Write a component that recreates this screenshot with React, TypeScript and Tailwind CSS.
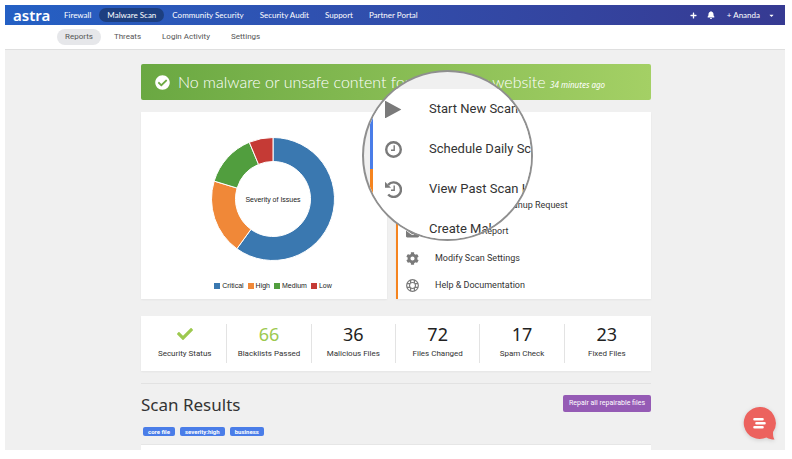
import { FaBell, FaCaretDown, FaCheck, FaCheckCircle, FaCog, FaEnvelope, FaPlus } from 'react-icons/fa'
import type { ReactNode } from 'react'

function PlayIcon({ className }: { className?: string }) {
  return (
    <svg viewBox="0 0 24 24" className={className} fill="currentColor" aria-hidden="true">
      <path d="M0 .5v23c0 .5.5.8 1 .5l21.500-11.500c.4-.2.4-.8 0-1L1 0c-.5-.3-1 0-1 .5z" />
    </svg>
  )
}

function ClockIcon({ className }: { className?: string }) {
  return (
    <svg viewBox="0 0 24 24" className={className} fill="none" stroke="currentColor" aria-hidden="true">
      <circle cx="12" cy="12" r="10.300" strokeWidth="3.400" />
      <path d="M13 6v7H8.500" strokeWidth="2" />
    </svg>
  )
}

function HistoryIcon({ className }: { className?: string }) {
  return (
    <svg viewBox="0 0 24 24" className={className} fill="none" stroke="currentColor" aria-hidden="true">
      <path d="M4.500 5.500A10.300 10.300 0 1 1 4.500 19" strokeWidth="3.400" />
      <path d="M0 1v8.500h8.500z" fill="currentColor" stroke="none" />
      <path d="M13 6.500V13H8.500" strokeWidth="2" />
    </svg>
  )
}

function LifeRingIcon({ className }: { className?: string }) {
  return (
    <svg viewBox="0 0 24 24" className={className} fill="none" stroke="currentColor" aria-hidden="true">
      <circle cx="12" cy="12" r="10.800" strokeWidth="2.200" />
      <circle cx="12" cy="12" r="5.500" strokeWidth="2" />
      <path d="M8.500 1.800v5.600M15.500 1.800v5.600M8.500 16.600v5.600M15.500 16.600v5.600" strokeWidth="2.200" />
      <path d="M1.800 8.500h5.600M1.800 15.500h5.600M16.600 8.500h5.600M16.600 15.500h5.600" strokeWidth="2.200" />
    </svg>
  )
}

const navLinks = ['Firewall', 'Malware Scan', 'Community Security', 'Security Audit', 'Support', 'Partner Portal']
const tabs = ['Reports', 'Threats', 'Login Activity', 'Settings']

const actions = [
  { label: 'Start New Scan', Icon: PlayIcon, border: 'border-[#4a7de8]' },
  { label: 'Schedule Daily Scan', Icon: ClockIcon, border: 'border-[#4a7de8]' },
  { label: 'View Past Scan History', Icon: HistoryIcon, border: 'border-[#f5841f]' },
  { label: 'Create Malware Cleanup Request', Icon: FaEnvelope, border: 'border-[#f5841f]' },
  { label: 'Email Scan Report', Icon: FaEnvelope, border: 'border-[#f5841f]' },
  { label: 'Modify Scan Settings', Icon: FaCog, border: 'border-[#f5841f]' },
  { label: 'Help & Documentation', Icon: LifeRingIcon, border: 'border-[#f5841f]' },
]

const severities = [
  { label: 'Critical', value: 60, color: '#3a78b0', swatch: 'bg-[#3a78b0]' },
  { label: 'High', value: 19.7, color: '#f08838', swatch: 'bg-[#f08838]' },
  { label: 'Medium', value: 14, color: '#519e3e', swatch: 'bg-[#519e3e]' },
  { label: 'Low', value: 6.3, color: '#c53a35', swatch: 'bg-[#c53a35]' },
]

const stats: { label: string; value: ReactNode; color: string }[] = [
  { label: 'Security Status', value: <FaCheck className="size-4" />, color: 'text-[#9dc94f]' },
  { label: 'Blacklists Passed', value: '66', color: 'text-[#9dc94f]' },
  { label: 'Malicious Files', value: '36', color: 'text-[#222]' },
  { label: 'Files Changed', value: '72', color: 'text-[#222]' },
  { label: 'Spam Check', value: '17', color: 'text-[#222]' },
  { label: 'Fixed Files', value: '23', color: 'text-[#222]' },
]

function point(r: number, share: number) {
  const a = (share / 100) * Math.PI * 2
  return `${62 + r * Math.sin(a)} ${62 - r * Math.cos(a)}`
}

function Donut() {
  let start = 0
  return (
    <svg viewBox="0 0 124 124" className="size-[124px]" role="img" aria-label="Severity of Issues">
      {severities.map(({ label, value, color }) => {
        const from = start
        const to = start + value
        start = to
        const large = value > 50 ? 1 : 0
        return (
          <path
            key={label}
            d={`M${point(61.5, from)}A61.5 61.5 0 ${large} 1 ${point(61.5, to)}L${point(37.5, to)}A37.5 37.5 0 ${large} 0 ${point(37.5, from)}Z`}
            fill={color}
            stroke="#fff"
          />
        )
      })}
      <text x="62" y="65" textAnchor="middle" fontSize="7" fill="#222" className="font-['Liberation_Sans']">
        Severity of Issues
      </text>
    </svg>
  )
}

function Header() {
  return (
    <header>
      <div className="flex h-5 items-center bg-linear-to-r from-[#2460c4] to-[#363a92] font-[Lato,sans-serif] text-[8px] text-white">
        <a href="#" className="w-[51px] pl-2 font-['Noto_Sans',sans-serif] text-[15px] leading-4 font-semibold">
          astra
        </a>
        <nav className="flex">
          {navLinks.map((link) => (
            <a
              key={link}
              href="#"
              className={`rounded-full px-2 leading-[14px] ${link === 'Malware Scan' ? 'bg-[#1d3f80]' : ''}`}
            >
              {link}
            </a>
          ))}
        </nav>
        <div className="ml-auto flex items-center pr-[10px]">
          <button aria-label="Add" className="mr-[10px]">
            <FaPlus className="size-[7px]" />
          </button>
          <button aria-label="Notifications" className="mr-3">
            <FaBell className="size-2" />
          </button>
          <button className="flex items-center gap-2">
            + Ananda
            <FaCaretDown className="size-[7px]" />
          </button>
        </div>
      </div>
      <nav className="flex h-[25px] items-center gap-[5px] border-b border-[#dfdfdf] bg-white pl-[52px] text-[8px] text-[#555]">
        {tabs.map((tab) => (
          <a key={tab} href="#" className={`rounded-full px-2 leading-4 ${tab === 'Reports' ? 'bg-[#e6e7ea]' : ''}`}>
            {tab}
          </a>
        ))}
      </nav>
    </header>
  )
}

function Magnifier() {
  return (
    <div
      aria-hidden="true"
      className="absolute -top-[42px] -left-[34px] size-[171px] overflow-hidden rounded-full border-2 border-[#777]/80 bg-[#f0f0f0] pt-[17px] pl-[6px]"
    >
      <ul className="w-60 bg-white">
        {actions.slice(0, 4).map(({ label, Icon, border }, i) => (
          <li key={label} className={`flex h-10 items-center border-l-[3px] pl-3 ${border}`}>
            <span className="w-11 shrink-0 text-[#7a7a7a]">{i < 3 && <Icon className="size-[17px]" />}</span>
            <span className="text-[13px] whitespace-nowrap text-[#333]">{label}</span>
          </li>
        ))}
      </ul>
    </div>
  )
}

function Actions() {
  return (
    <div className="relative flex-1">
      <ul className="grid h-full grid-rows-7 bg-white shadow-xs">
        {actions.map(({ label, Icon, border }) => (
          <li key={label} className={`flex border-l-2 ${border}`}>
            <button className="flex w-full items-center pl-2 text-left text-[9px] text-[#333]">
              <span className="w-[29px] text-[#7a7a7a]">
                <Icon className="size-[13px]" />
              </span>
              {label}
            </button>
          </li>
        ))}
      </ul>
      <Magnifier />
    </div>
  )
}

export default function App() {
  return (
    <div className="flex min-h-screen flex-col bg-white pt-[5px] pr-[7px] pb-[9px] pl-[5px] font-[Roboto,sans-serif]">
      <div className="relative flex flex-1 flex-col bg-[#f0f0f0]">
        <Header />
        <main className="mx-auto flex w-full max-w-[512px] flex-1 flex-col pt-[14px] pl-[2px]">
          <div className="flex h-9 items-center rounded-xs bg-linear-to-r from-[#6aa842] to-[#a4d065] pl-[14px] text-white">
            <FaCheckCircle className="mr-2 size-[15px]" />
            <p className="font-[Lato,sans-serif] text-[16px] font-light">
              No malware or unsafe content found on your website{' '}
              <em className="font-['Noto_Sans',sans-serif] text-[8px] font-normal">34 minutes ago</em>
            </p>
          </div>

          <div className="mt-3 flex h-[187px] gap-[9px]">
            <section className="flex w-[246px] flex-col items-center bg-white pt-[25px] pl-[18px] shadow-xs">
              <Donut />
              <ul className="mt-5 flex gap-1 font-['Liberation_Sans',sans-serif] text-[7px] leading-[10px] text-[#222]">
                {severities.map(({ label, swatch }) => (
                  <li key={label} className="flex items-center gap-[2px]">
                    <span className={`size-[6px] ${swatch}`} />
                    {label}
                  </li>
                ))}
              </ul>
            </section>
            <Actions />
          </div>

          <dl className="mt-[17px] grid h-[55px] grid-cols-6 divide-x divide-[#e3e3e3] bg-white px-[2px] py-2 shadow-xs">
            {stats.map(({ label, value, color }) => (
              <div key={label} className="flex flex-col-reverse items-center justify-end">
                <dt className="mt-[3px] text-[8px] leading-[14px] text-[#333]">{label}</dt>
                <dd className={`flex h-5 items-center font-['Noto_Sans',sans-serif] text-[18px] ${color}`}>{value}</dd>
              </div>
            ))}
          </dl>

          <div className="mt-3 flex items-start justify-between border-t border-[#e2e2e2] pt-[11px]">
            <h1 className="font-['Noto_Sans',sans-serif] text-[17px] leading-5 text-[#333]">Scan Results</h1>
            <button className="h-[17px] rounded-xs bg-[#955bb5] px-[6px] text-[7px] text-white">
              Repair all repairable files
            </button>
          </div>
          <div className="mt-3 mb-2 flex gap-[5px] pl-[2px] text-[6px] leading-[9px] font-bold text-white">
            {['core file', 'severity:high', 'business'].map((tag) => (
              <span key={tag} className="rounded-xs bg-[#4a7de8] px-[5px]">
                {tag}
              </span>
            ))}
          </div>
          <section className="flex-1 border-t border-[#e6e6e6] bg-white" />
        </main>

        <button aria-label="Open chat" className="absolute right-[9px] bottom-[10px] drop-shadow-sm">
          <svg viewBox="0 0 33 33" className="size-[33px]">
            <path d="M16.500 0a16 16 0 1 0 7 30.500c2.500 1.500 5 2 8 2-1.500-2-1.500-5-1.500-7.500A16 16 0 0 0 16.500 0z" fill="#ec625e" />
            <g stroke="#fff" strokeWidth="2.600" strokeLinecap="round">
              <path d="M11.500 12.300h8M13.500 16.300h8M11.500 20.300h8" />
            </g>
          </svg>
        </button>
      </div>
    </div>
  )
}
